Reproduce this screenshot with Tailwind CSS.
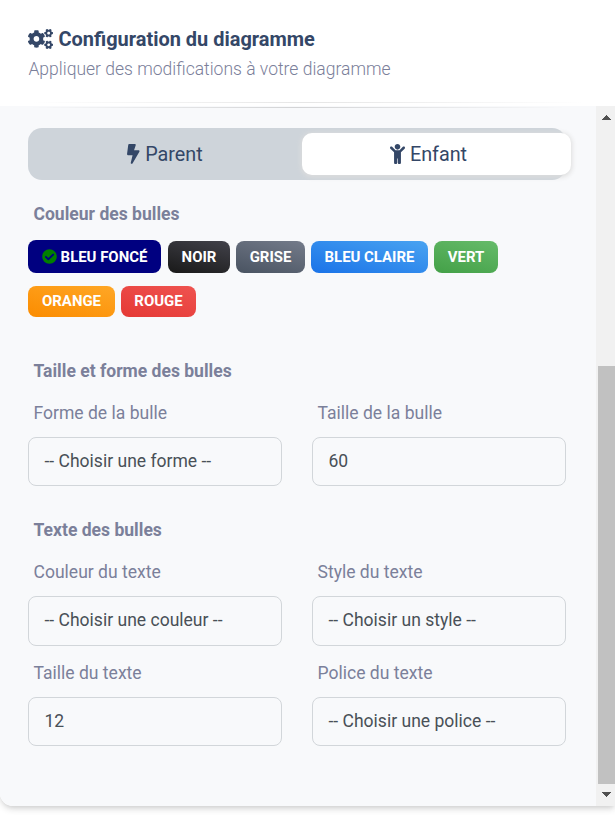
<!DOCTYPE html>
<html lang="fr">
<head>
<meta charset="utf-8">
<title>Configuration du diagramme</title>
<script src="https://cdn.jsdelivr.net/npm/@tailwindcss/browser@4"></script>
</head>
<body class="h-[815px] overflow-hidden bg-white font-[Roboto,sans-serif] text-[17.55px] text-[#7b809a]">
<main class="flex h-[806px] flex-col overflow-hidden rounded-bl-[13px] bg-white shadow-[0_4px_7px_-1px_rgba(0,0,0,0.14),0_2px_4px_-1px_rgba(0,0,0,0.08)]">
  <header class="flex h-[106px] shrink-0 flex-col px-7 pt-[25px]">
    <h1 class="flex h-7 items-center text-[19.97px] font-bold leading-7 text-[#344767]">
      <svg class="relative -top-[0.5px] mr-[5.5px] h-5 w-[25px]" viewBox="0 0 640 512" fill="currentColor">
        <defs><path id="small-cog" d="M512.1 191l-8.2 14.3c-3 5.3-9.4 7.5-15.1 5.4-11.8-4.4-22.6-10.7-32.1-18.6-4.6-3.8-5.8-10.5-2.8-15.7l8.2-14.3c-6.9-8-12.3-17.3-15.9-27.4h-16.5c-6 0-11.2-4.3-12.2-10.3-2-12-2.1-24.6 0-37.1 1-6 6.2-10.4 12.2-10.4h16.5c3.6-10.1 9-19.4 15.9-27.4l-8.2-14.3c-3-5.2-1.9-11.9 2.8-15.7 9.5-7.9 20.4-14.2 32.1-18.6 5.7-2.1 12.1.1 15.1 5.4l8.2 14.3c10.5-1.9 21.2-1.9 31.7 0L552 6.3c3-5.3 9.4-7.5 15.1-5.4 11.8 4.4 22.6 10.7 32.1 18.6 4.6 3.8 5.8 10.5 2.8 15.7l-8.2 14.3c6.9 8 12.3 17.3 15.9 27.4h16.5c6 0 11.2 4.3 12.2 10.3 2 12 2.1 24.6 0 37.1-1 6-6.2 10.4-12.2 10.4h-16.5c-3.6 10.1-9 19.4-15.9 27.4l8.2 14.3c3 5.2 1.9 11.9-2.8 15.7-9.5 7.9-20.4 14.2-32.1 18.6-5.7 2.1-12.1-.1-15.1-5.4l-8.2-14.3c-10.4 1.9-21.2 1.9-31.7 0zm-10.5-58.8c38.5 29.6 82.4-14.3 52.8-52.8-38.5-29.7-82.4 14.3-52.8 52.8z"/></defs>
        <use href="#small-cog"/>
        <use href="#small-cog" y="298.9"/>
        <path d="M386.3 286.1l33.7 16.8c10.1 5.8 14.5 18.1 10.5 29.1-8.9 24.2-26.4 46.4-42.6 65.8-7.4 8.9-20.2 11.1-30.3 5.3l-29.1-16.8c-16 13.7-34.6 24.6-54.9 31.7v33.6c0 11.6-8.3 21.6-19.7 23.6-24.6 4.2-50.4 4.4-75.9 0-11.5-2-20-11.9-20-23.6V418c-20.3-7.2-38.9-18-54.9-31.7L74 403c-10 5.8-22.9 3.6-30.3-5.3-16.2-19.4-33.3-41.6-42.2-65.7-4-10.9.4-23.2 10.5-29.1l33.3-16.8c-3.9-20.9-3.9-42.4 0-63.4L12 205.8c-10.1-5.8-14.6-18.1-10.5-29 8.9-24.2 26-46.4 42.2-65.8 7.4-8.9 20.2-11.1 30.3-5.3l29.1 16.8c16-13.7 34.6-24.6 54.9-31.7V57.1c0-11.5 8.2-21.5 19.6-23.5 24.6-4.2 50.5-4.4 76-.1 11.5 2 20 11.9 20 23.6v33.6c20.3 7.2 38.9 18 54.9 31.7l29.1-16.8c10-5.8 22.9-3.6 30.3 5.3 16.2 19.4 33.2 41.6 42.1 65.8 4 10.9.1 23.2-10 29.1l-33.7 16.8c3.9 21 3.9 42.5 0 63.5zm-117.6 21.1c59.2-77-28.7-164.9-105.7-105.7-59.2 77 28.7 164.9 105.7 105.7z"/>
      </svg>
      <span>Configuration du diagramme</span>
    </h1>
    <p class="mt-[2px] h-7 pl-[0.4px] text-[17.52px] font-light leading-7">Appliquer des modifications à votre diagramme</p>
    <div class="mt-[19px] h-px shrink-0 bg-linear-to-r from-transparent via-black/10 to-transparent"></div>
  </header>

  <div class="flex min-h-0 flex-1">
    <section class="min-w-0 flex-1 bg-[#f8f9fb] pl-7 pr-[30px] pt-px">
      <div class="h-px bg-linear-to-r from-transparent via-black/15 to-transparent"></div>

      <nav class="mt-5 grid h-[52px] w-[538px] grid-cols-2 rounded-[14px] bg-[#ced4da] text-[19.8px] text-[#344767]">
        <div class="flex items-center justify-center pl-[5px] pt-px">
          <svg class="relative -top-px mr-[5.5px] h-5 w-[12.5px]" viewBox="0 0 320 512" fill="currentColor"><path d="M296 160H180.6l42.6-129.8C227.2 15 215.7 0 200 0H56C44 0 33.8 8.9 32.2 20.8l-32 240C-1.7 275.2 9.5 288 24 288h118.7L96.6 482.5c-3.6 15.2 8 29.5 23.3 29.5 8.4 0 16.4-4.4 20.8-12l176-304c9.3-15.9-2.2-36-20.7-36z"/></svg>
          <span>Parent</span>
        </div>
        <div class="my-[5px] ml-[5px] -mr-[5px] flex items-center justify-center rounded-[10px] bg-white pr-[16px] pt-px shadow-[0_1px_5px_1px_#ddd]">
          <svg class="relative -top-px mr-[5px] h-5 w-[15px]" viewBox="0 0 384 512" fill="currentColor"><path d="M120 72c0-39.765 32.235-72 72-72s72 32.235 72 72c0 39.764-32.235 72-72 72s-72-32.236-72-72zm254.627 1.373c-12.496-12.497-32.758-12.497-45.254 0L242.745 160H141.254L54.627 73.373c-12.496-12.497-32.758-12.497-45.254 0-12.497 12.497-12.497 32.758 0 45.255L104 213.254V480c0 17.673 14.327 32 32 32h16c17.673 0 32-14.327 32-32V368h16v112c0 17.673 14.327 32 32 32h16c17.673 0 32-14.327 32-32V213.254l94.627-94.627c12.497-12.497 12.497-32.757 0-45.254z"/></svg>
          <span>Enfant</span>
        </div>
      </nav>

      <h2 class="mt-5 h-7 pl-[5.5px] font-bold leading-7">Couleur des bulles</h2>
      <div class="mt-3 flex h-[33px] items-end gap-[6px] text-[14.95px] font-bold leading-none text-white">
        <span class="mr-px flex h-[33px] w-[133px] items-center justify-center rounded-lg bg-[#000080] pt-px">
          <svg class="relative -top-px mr-1 size-[15px]" viewBox="0 0 512 512" fill="#008000"><path d="M504 256c0 136.967-111.033 248-248 248S8 392.967 8 256 119.033 8 256 8s248 111.033 248 248zM227.314 387.314l184-184c6.248-6.248 6.248-16.379 0-22.627l-22.627-22.627c-6.248-6.249-16.379-6.249-22.628 0L216 308.118l-70.059-70.059c-6.248-6.248-16.379-6.248-22.628 0l-22.627 22.627c-6.248 6.248-6.248 16.379 0 22.627l104 104c6.249 6.249 16.379 6.249 22.628.001z"/></svg>BLEU FONCÉ</span>
        <span class="flex h-8 w-[62px] items-center justify-center rounded-lg bg-linear-[195deg,#42424a,#191919] pt-px">NOIR</span>
        <span class="flex h-8 w-[69px] items-center justify-center rounded-lg bg-linear-[195deg,#747b8a,#495361] pt-px">GRISE</span>
        <span class="flex h-8 w-[117px] items-center justify-center rounded-lg bg-linear-[195deg,#49a3f1,#1a73e8] pt-px">BLEU CLAIRE</span>
        <span class="flex h-8 w-16 items-center justify-center rounded-lg bg-linear-[195deg,#66bb6a,#43a047] pt-px">VERT</span>
      </div>
      <div class="mt-[13px] flex h-[31px] gap-[6px] text-[14.95px] font-bold leading-none text-white">
        <span class="flex w-[87px] items-center justify-center rounded-lg bg-linear-[195deg,#ffa726,#fb8c00]">ORANGE</span>
        <span class="flex w-[75px] items-center justify-center rounded-lg bg-linear-[195deg,#ef5350,#e53935]">ROUGE</span>
      </div>

      <h2 class="mt-10 h-7 pl-[5.5px] font-bold leading-7">Taille et forme des bulles</h2>
      <div class="mt-[14px] grid grid-cols-2 gap-x-[30px]">
        <div>
          <label class="block h-7 pl-[5.5px] leading-7">Forme de la bulle</label>
          <div class="mt-[10px] flex h-[49px] items-center rounded-lg border border-[#d2d6da] pl-[15.5px] pb-px text-[#495057]">-- Choisir une forme --</div>
        </div>
        <div>
          <label class="block h-7 pl-[5.5px] leading-7">Taille de la bulle</label>
          <div class="mt-[10px] flex h-[49px] items-center rounded-lg border border-[#d2d6da] pl-[15.5px] pb-px text-[#495057]">60</div>
        </div>
      </div>

      <h2 class="mt-[30px] h-7 pl-[5.5px] font-bold leading-7">Texte des bulles</h2>
      <div class="mt-[14px] grid grid-cols-2 gap-x-[30px] gap-y-[13px]">
        <div>
          <label class="block h-7 pl-[5.5px] leading-7">Couleur du texte</label>
          <div class="mt-[10px] flex h-[50px] items-center rounded-lg border border-[#d2d6da] pl-[15.5px] pb-px text-[#495057]">-- Choisir une couleur --</div>
        </div>
        <div>
          <label class="block h-7 pl-[5.5px] leading-7">Style du texte</label>
          <div class="mt-[10px] flex h-[50px] items-center rounded-lg border border-[#d2d6da] pl-[15.5px] pb-px text-[#495057]">-- Choisir un style --</div>
        </div>
        <div>
          <label class="block h-7 pl-[5.5px] leading-7">Taille du texte</label>
          <div class="mt-[10px] flex h-[49px] items-center rounded-lg border border-[#d2d6da] pl-[15.5px] pb-px text-[#495057]">12</div>
        </div>
        <div>
          <label class="block h-7 pl-[5.5px] leading-7">Police du texte</label>
          <div class="mt-[10px] flex h-[49px] items-center rounded-lg border border-[#d2d6da] pl-[15.5px] pb-px text-[#495057]">-- Choisir une police --</div>
        </div>
      </div>
    </section>

    <aside class="flex w-[19px] shrink-0 flex-col bg-[#f1f1f1]">
      <svg class="h-[260px] w-[19px]" viewBox="0 0 19 260" fill="#505050" shape-rendering="crispEdges"><path d="M6 14L10.5 9L15 14z"/></svg>
      <div class="ml-[2px] h-[418px] bg-[#c1c1c1]"></div>
      <svg class="h-[22px] w-[19px]" viewBox="0 0 19 22" fill="#505050" shape-rendering="crispEdges"><path d="M6 8L10.5 13L15 8z"/></svg>
    </aside>
  </div>
</main>
</body>
</html>
